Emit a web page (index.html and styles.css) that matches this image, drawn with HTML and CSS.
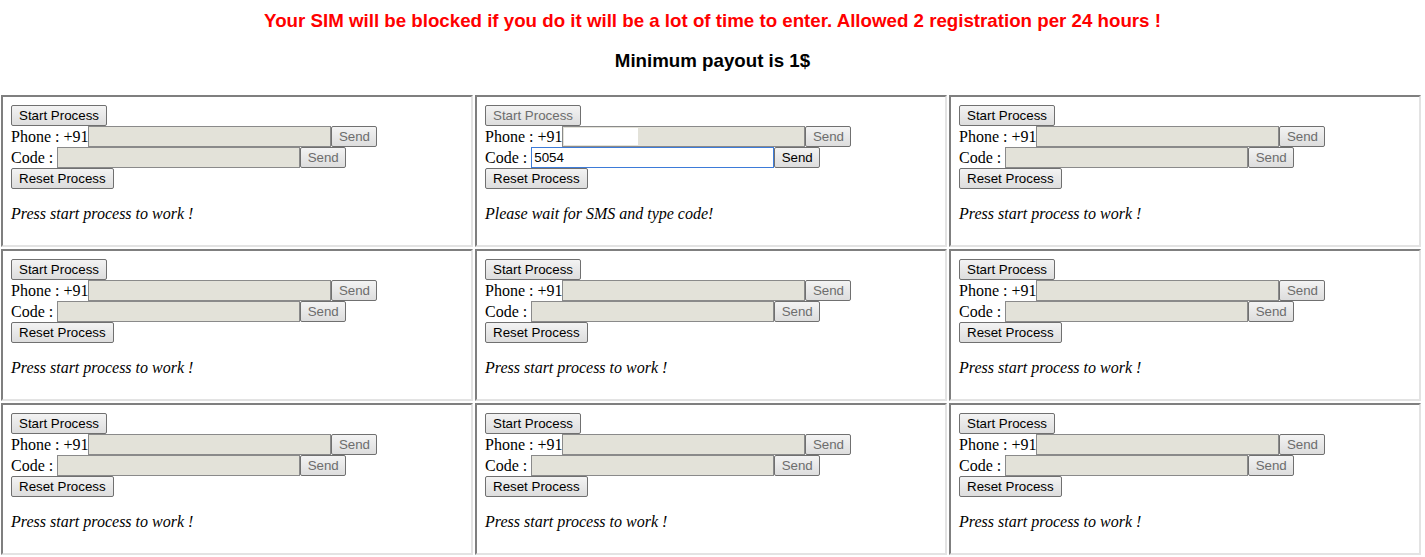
FILE: index.html
```html
<!DOCTYPE html>
<html>
<head>
<meta charset="utf-8">
<link rel="stylesheet" href="styles.css">
</head>
<body>
<h3 class="warn">Your SIM will be blocked if you do it will be a lot of time to enter. Allowed 2 registration per 24 hours !</h3>
<h3 class="payout">Minimum payout is 1$</h3>
<div class="grid">
  <div class="cell">
    <div class="row"><button class="btn">Start Process</button></div>
    <div class="row">Phone : +91<input class="inp" disabled><button class="btn send" disabled>Send</button></div>
    <div class="row">Code :&nbsp;<input class="inp" disabled><button class="btn send" disabled>Send</button></div>
    <div class="row"><button class="btn">Reset Process</button></div>
    <p class="msg">Press start process to work !</p>
  </div>
  <div class="cell">
    <div class="row"><button class="btn" disabled>Start Process</button></div>
    <div class="row">Phone : +91<span class="wrap"><input class="inp" disabled><span class="redact"></span></span><button class="btn send" disabled>Send</button></div>
    <div class="row">Code :&nbsp;<input class="inp active" value="5054"><button class="btn send">Send</button></div>
    <div class="row"><button class="btn">Reset Process</button></div>
    <p class="msg">Please wait for SMS and type code!</p>
  </div>
  <div class="cell">
    <div class="row"><button class="btn">Start Process</button></div>
    <div class="row">Phone : +91<input class="inp" disabled><button class="btn send" disabled>Send</button></div>
    <div class="row">Code :&nbsp;<input class="inp" disabled><button class="btn send" disabled>Send</button></div>
    <div class="row"><button class="btn">Reset Process</button></div>
    <p class="msg">Press start process to work !</p>
  </div>
  <div class="cell">
    <div class="row"><button class="btn">Start Process</button></div>
    <div class="row">Phone : +91<input class="inp" disabled><button class="btn send" disabled>Send</button></div>
    <div class="row">Code :&nbsp;<input class="inp" disabled><button class="btn send" disabled>Send</button></div>
    <div class="row"><button class="btn">Reset Process</button></div>
    <p class="msg">Press start process to work !</p>
  </div>
  <div class="cell">
    <div class="row"><button class="btn">Start Process</button></div>
    <div class="row">Phone : +91<input class="inp" disabled><button class="btn send" disabled>Send</button></div>
    <div class="row">Code :&nbsp;<input class="inp" disabled><button class="btn send" disabled>Send</button></div>
    <div class="row"><button class="btn">Reset Process</button></div>
    <p class="msg">Press start process to work !</p>
  </div>
  <div class="cell">
    <div class="row"><button class="btn">Start Process</button></div>
    <div class="row">Phone : +91<input class="inp" disabled><button class="btn send" disabled>Send</button></div>
    <div class="row">Code :&nbsp;<input class="inp" disabled><button class="btn send" disabled>Send</button></div>
    <div class="row"><button class="btn">Reset Process</button></div>
    <p class="msg">Press start process to work !</p>
  </div>
  <div class="cell">
    <div class="row"><button class="btn">Start Process</button></div>
    <div class="row">Phone : +91<input class="inp" disabled><button class="btn send" disabled>Send</button></div>
    <div class="row">Code :&nbsp;<input class="inp" disabled><button class="btn send" disabled>Send</button></div>
    <div class="row"><button class="btn">Reset Process</button></div>
    <p class="msg">Press start process to work !</p>
  </div>
  <div class="cell">
    <div class="row"><button class="btn">Start Process</button></div>
    <div class="row">Phone : +91<input class="inp" disabled><button class="btn send" disabled>Send</button></div>
    <div class="row">Code :&nbsp;<input class="inp" disabled><button class="btn send" disabled>Send</button></div>
    <div class="row"><button class="btn">Reset Process</button></div>
    <p class="msg">Press start process to work !</p>
  </div>
  <div class="cell">
    <div class="row"><button class="btn">Start Process</button></div>
    <div class="row">Phone : +91<input class="inp" disabled><button class="btn send" disabled>Send</button></div>
    <div class="row">Code :&nbsp;<input class="inp" disabled><button class="btn send" disabled>Send</button></div>
    <div class="row"><button class="btn">Reset Process</button></div>
    <p class="msg">Press start process to work !</p>
  </div>
</div>
</body>
</html>
```

FILE: styles.css
```css
html, body {
  margin: 0;
  padding: 0;
  background: #ffffff;
}
body {
  font-family: "Liberation Serif", "Times New Roman", serif;
  font-size: 16px;
  color: #000;
}
h3 {
  font-family: "Liberation Sans", Arial, sans-serif;
  font-size: 18.72px;
  font-weight: bold;
  text-align: center;
  line-height: 22px;
  margin: 0;
}
.warn {
  color: #ff0000;
  padding-top: 10px;
}
.payout {
  margin-top: 18px;
}
.grid {
  display: grid;
  grid-template-columns: repeat(3, 472px);
  gap: 2px;
  padding-left: 1px;
  margin-top: 23px;
}
.cell {
  box-sizing: border-box;
  height: 152px;
  border: 2px solid;
  border-color: #7f7f7f #e3e3e3 #e3e3e3 #7f7f7f;
  padding: 8px 8px;
}
.row {
  display: flex;
  align-items: center;
  height: 21px;
  line-height: 21px;
  white-space: nowrap;
}
.btn {
  box-sizing: border-box;
  height: 21px;
  margin: 0;
  padding: 0 7px;
  font-family: "Liberation Sans", Arial, sans-serif;
  font-size: 13.33px;
  color: #000;
  background: linear-gradient(#f3f3f3, #dddddd);
  border: 1px solid #707070;
  border-radius: 2px;
}
.btn.send {
  width: 46px;
  padding: 0;
}
.btn:disabled {
  color: #6d6d6d;
}
.inp {
  box-sizing: border-box;
  width: 243px;
  height: 21px;
  margin: 0;
  padding: 1px 2px;
  font-family: "Liberation Sans", Arial, sans-serif;
  font-size: 13.33px;
  color: #000;
  background: #e3e2d9;
  border: 1px solid #8a8a8a;
  border-radius: 0;
  outline: none;
}
.inp.active {
  background: #ffffff;
  border-color: #3d7bd8;
}
.wrap {
  position: relative;
  display: flex;
}
.redact {
  position: absolute;
  left: 2px;
  top: 2px;
  width: 74px;
  height: 17px;
  background: #ffffff;
}
.msg {
  margin: 16px 0 0;
  font-style: italic;
  font-size: 16px;
  line-height: 18px;
}
```
